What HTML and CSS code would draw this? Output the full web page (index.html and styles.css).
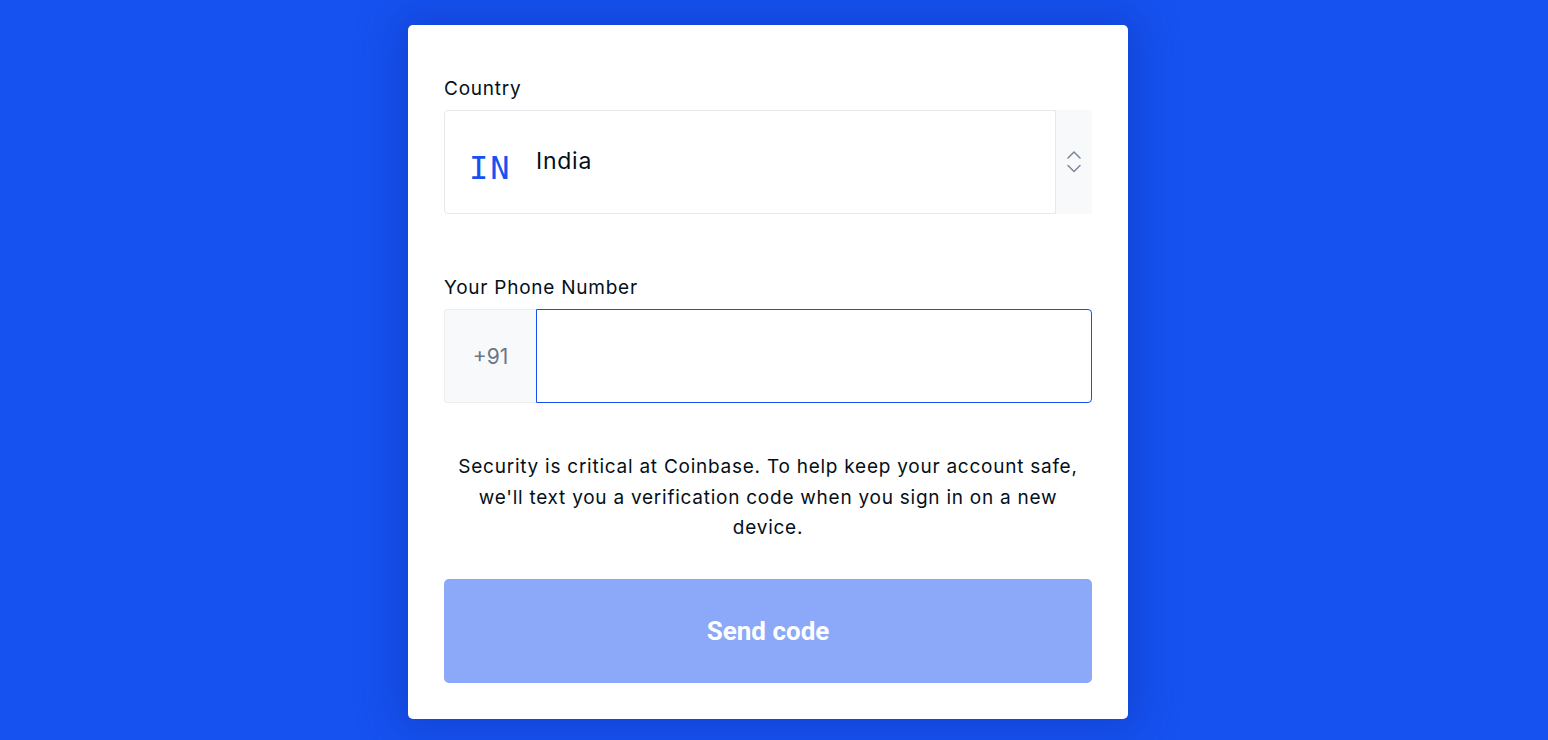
FILE: index.html
```html
<!DOCTYPE html>
<html lang="en">
<head>
<meta charset="utf-8">
<title>Phone verification</title>
<link rel="stylesheet" href="styles.css">
</head>
<body>
<main class="page">
  <form class="card">
    <label class="label">Country</label>
    <div class="select">
      <div class="select-main">
        <span class="code">IN</span>
        <span class="country">India</span>
      </div>
      <div class="stepper">
        <svg width="14" height="22" viewBox="0 0 14 22" fill="none" stroke="#7a889c" stroke-width="1.5" stroke-linecap="round" stroke-linejoin="round">
          <path d="M1 7 L7 1 L13 7"/>
          <path d="M1 14.5 L7 20.5 L13 14.5"/>
        </svg>
      </div>
    </div>

    <label class="label label-phone">Your Phone Number</label>
    <div class="phone">
      <div class="prefix">+91</div>
      <div class="phone-input"></div>
    </div>

    <p class="note">Security is critical at Coinbase. To help keep your account safe, we'll text you a verification code when you sign in on a new device.</p>

    <div class="button">Send code</div>
  </form>
</main>
</body>
</html>
```
FILE: styles.css
```css
html, body {
  margin: 0;
  padding: 0;
}
body {
  background: #1652f0;
  font-family: "Inter", "Lato", sans-serif;
  color: #050f19;
  height: 740px;
  overflow: hidden;
}
.page {
  display: flex;
  justify-content: center;
  padding-top: 25px;
  padding-right: 12px;
}
.card {
  width: 720px;
  box-sizing: border-box;
  background: #ffffff;
  border-radius: 5px;
  padding: 52px 36px 36px;
  display: flex;
  flex-direction: column;
  box-shadow: 0 0 40px 10px rgba(16, 50, 180, 0.45);
}
.label {
  font-size: 19px;
  letter-spacing: 0.75px;
  line-height: 24px;
  margin-bottom: 9px;
}
.label-phone {
  margin-top: 62px;
}
.select {
  display: flex;
  height: 104px;
}
.select-main {
  flex: 1;
  border: 1px solid #e6e8eb;
  border-radius: 4px 0 0 4px;
  display: flex;
  align-items: center;
  padding-left: 24px;
}
.code {
  font-family: "DejaVu Sans Mono", "Liberation Mono", monospace;
  color: #1652f0;
  font-size: 32px;
  letter-spacing: 2px;
  margin-top: 12px;
  width: 67px;
}
.country {
  font-size: 23px;
  letter-spacing: 0.75px;
  margin-top: -2px;
}
.stepper {
  width: 36px;
  background: #f8f9fb;
  border-radius: 0 4px 4px 0;
  display: flex;
  align-items: center;
  justify-content: center;
}
.phone {
  display: flex;
  height: 94px;
}
.prefix {
  width: 92px;
  box-sizing: border-box;
  background: #f8f9fb;
  border: 1px solid #eceef1;
  border-right: none;
  border-radius: 4px 0 0 4px;
  display: flex;
  align-items: center;
  justify-content: center;
  color: #6b7687;
  font-size: 21px;
}
.phone-input {
  flex: 1;
  border: 1px solid #1652f0;
  border-radius: 0 4px 4px 0;
}
.note {
  margin: 49px 8px 0;
  text-align: center;
  font-size: 19px;
  letter-spacing: 0.75px;
  line-height: 30.5px;
}
.button {
  margin-top: 35px;
  height: 104px;
  border-radius: 5px;
  background: #8ba9f8;
  color: #ffffff;
  font-family: "Roboto", sans-serif;
  font-weight: 700;
  font-size: 26px;
  display: flex;
  align-items: center;
  justify-content: center;
}
```
